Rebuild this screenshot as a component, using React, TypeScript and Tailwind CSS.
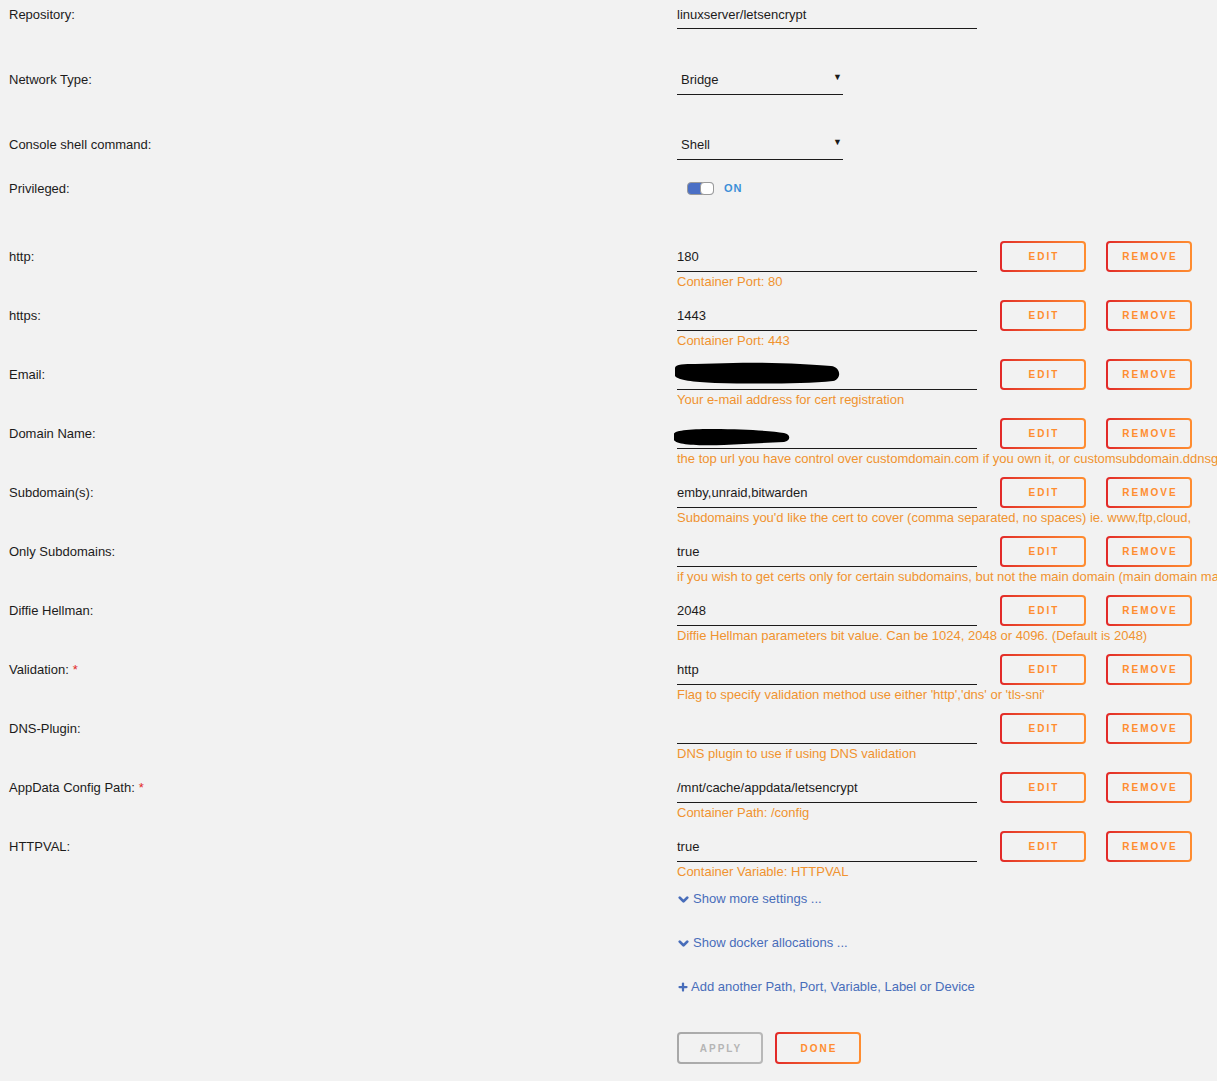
import { ChevronDown, Plus } from "lucide-react";

const font = { fontFamily: '"Liberation Sans", Arial, sans-serif' };

type Row = {
  label: string;
  value?: string;
  help: string;
  required?: boolean;
  blob?: "email" | "domain";
};

const rows: Row[] = [
  { label: "http:", value: "180", help: "Container Port: 80" },
  { label: "https:", value: "1443", help: "Container Port: 443" },
  { label: "Email:", help: "Your e-mail address for cert registration", blob: "email" },
  {
    label: "Domain Name:",
    help: "the top url you have control over customdomain.com if you own it, or customsubdomain.ddnsgeek.com if you're using a dynamic dns service",
    blob: "domain",
  },
  {
    label: "Subdomain(s):",
    value: "emby,unraid,bitwarden",
    help: "Subdomains you'd like the cert to cover (comma separated, no spaces) ie. www,ftp,cloud,",
  },
  {
    label: "Only Subdomains:",
    value: "true",
    help: "if you wish to get certs only for certain subdomains, but not the main domain (main domain may be hosted on another machine)",
  },
  {
    label: "Diffie Hellman:",
    value: "2048",
    help: "Diffie Hellman parameters bit value. Can be 1024, 2048 or 4096. (Default is 2048)",
  },
  {
    label: "Validation:",
    value: "http",
    help: "Flag to specify validation method use either 'http','dns' or 'tls-sni'",
    required: true,
  },
  { label: "DNS-Plugin:", value: "", help: "DNS plugin to use if using DNS validation" },
  {
    label: "AppData Config Path:",
    value: "/mnt/cache/appdata/letsencrypt",
    help: "Container Path: /config",
    required: true,
  },
  { label: "HTTPVAL:", value: "true", help: "Container Variable: HTTPVAL" },
];

function GradBtn({ text, grey, className }: { text: string; grey?: boolean; className?: string }) {
  return (
    <div
      className={
        "p-[2px] rounded-[4px] " +
        (grey
          ? "bg-linear-to-r from-[#a8a8a8] to-[#b8b8b8] "
          : "bg-linear-to-r from-[#e22828] to-[#ff8d30] ") +
        (className || "")
      }
    >
      <div
        className={
          "w-full h-full rounded-[2px] bg-[#f2f2f2] flex items-center justify-center pl-[2px] text-[10px] font-bold tracking-[2px] " +
          (grey ? "text-[#b5b5b5]" : "text-[#ff8d30]")
        }
      >
        {text}
      </div>
    </div>
  );
}

function Blob({ kind }: { kind: "email" | "domain" }) {
  if (kind === "email")
    return (
      <svg width="170" height="26" viewBox="0 0 170 26" className="-ml-[4px] -mt-[6px]">
        <path
          d="M2 9 C2 5 12 5 22 5 L60 4 C95 3 135 5 158 7 C168 8 169 20 160 22 C130 25 80 25 42 24 C20 23 5 21 2 17 Z"
          fill="#000"
        />
        <path d="M4 7 L24 5 L26 9 L6 11 Z" fill="#000" />
      </svg>
    );
  return (
    <svg width="122" height="26" viewBox="0 0 122 26" className="-ml-[5px] mt-[1px]">
      <path
        d="M2 12 C2 8 22 7 42 7 C72 7 100 9 112 11 C119 12 119 19 112 20 C92 21 72 22 52 23 C30 24 4 23 2 18 Z"
        fill="#000"
      />
    </svg>
  );
}

function Label({ text, required }: { text: string; required?: boolean }) {
  return (
    <div className="w-[677px] shrink-0 pl-[9px] pt-[2px] h-[30px] flex items-center text-[13px] text-[#1c1b1b]">
      {text}
      {required && <span className="ml-[4px] text-[#e22828]">*</span>}
    </div>
  );
}

export default function App() {
  return (
    <div className="min-h-screen w-full overflow-hidden bg-[#f2f2f2] text-[#1c1b1b]" style={font}>
      {/* Repository */}
      <div className="flex h-[65px]">
        <div className="w-[677px] shrink-0 pl-[9px] pt-[1px] h-[29px] flex items-center text-[13px]">Repository:</div>
        <div className="w-[300px] h-[29px] pt-[1px] border-b border-[#1c1b1b] flex items-center text-[13px]">
          linuxserver/letsencrypt
        </div>
      </div>

      {/* Network Type */}
      <div className="flex h-[65px]">
        <div className="w-[677px] shrink-0 pl-[9px] h-[30px] flex items-center text-[13px]">Network Type:</div>
        <div className="w-[166px] h-[30px] border-b border-[#1c1b1b] flex items-center justify-between pl-[4px] pr-[1px] text-[13px]">
          <span>Bridge</span>
          <span className="text-[9px] -mt-[3px]">▼</span>
        </div>
      </div>

      {/* Console */}
      <div className="flex h-[44px]">
        <div className="w-[677px] shrink-0 pl-[9px] h-[30px] flex items-center text-[13px]">
          Console shell command:
        </div>
        <div className="w-[166px] h-[30px] border-b border-[#1c1b1b] flex items-center justify-between pl-[4px] pr-[1px] text-[13px]">
          <span>Shell</span>
          <span className="text-[9px] -mt-[3px]">▼</span>
        </div>
      </div>

      {/* Privileged */}
      <div className="flex h-[67px]">
        <div className="w-[677px] shrink-0 pl-[9px] pt-[1px] h-[28px] flex items-center text-[13px]">Privileged:</div>
        <div className="h-[28px] flex items-center pl-[10px]">
          <div className="relative w-[27px] h-[13px] rounded-[4px] bg-[#4a6fc5] border border-[#9a9a9a]">
            <div className="absolute right-[-1px] top-[-1px] w-[14px] h-[13px] rounded-[4px] bg-white border border-[#9a9a9a]" />
          </div>
          <span className="ml-[10px] text-[11px] font-bold tracking-[1px] text-[#3a8fd8]">ON</span>
        </div>
      </div>

      {/* Config rows */}
      {rows.map((r) => (
        <div key={r.label} className="flex h-[59px]">
          <Label text={r.label} required={r.required} />
          <div className="w-[300px] shrink-0">
            <div className="h-[31px] pt-[2px] border-b border-[#1c1b1b] flex items-center text-[13px]">
              {r.blob ? <Blob kind={r.blob} /> : r.value}
            </div>
            <div className="text-[13px] leading-[18px] pt-[1px] whitespace-nowrap text-[#f0922f]">{r.help}</div>
          </div>
          <GradBtn text="EDIT" className="ml-[23px] w-[86px] h-[31px]" />
          <GradBtn text="REMOVE" className="ml-[20px] w-[86px] h-[31px]" />
        </div>
      ))}

      {/* Links */}
      <div className="pl-[677px] text-[13px] text-[#486dba]">
        <div className="h-[18px] flex items-center">
          <ChevronDown size={15} strokeWidth={4.5} className="mr-[2px] -ml-[1px]" />
          Show more settings ...
        </div>
        <div className="h-[18px] mt-[26px] flex items-center">
          <ChevronDown size={15} strokeWidth={4.5} className="mr-[2px] -ml-[1px]" />
          Show docker allocations ...
        </div>
        <div className="h-[18px] mt-[26px] flex items-center">
          <Plus size={12} strokeWidth={4.5} className="mr-[2px]" />
          Add another Path, Port, Variable, Label or Device
        </div>
        <div className="flex gap-[12px] mt-[36px] pb-[18px]">
          <GradBtn text="APPLY" grey className="w-[86px] h-[32px]" />
          <GradBtn text="DONE" className="w-[86px] h-[32px]" />
        </div>
      </div>
    </div>
  );
}
